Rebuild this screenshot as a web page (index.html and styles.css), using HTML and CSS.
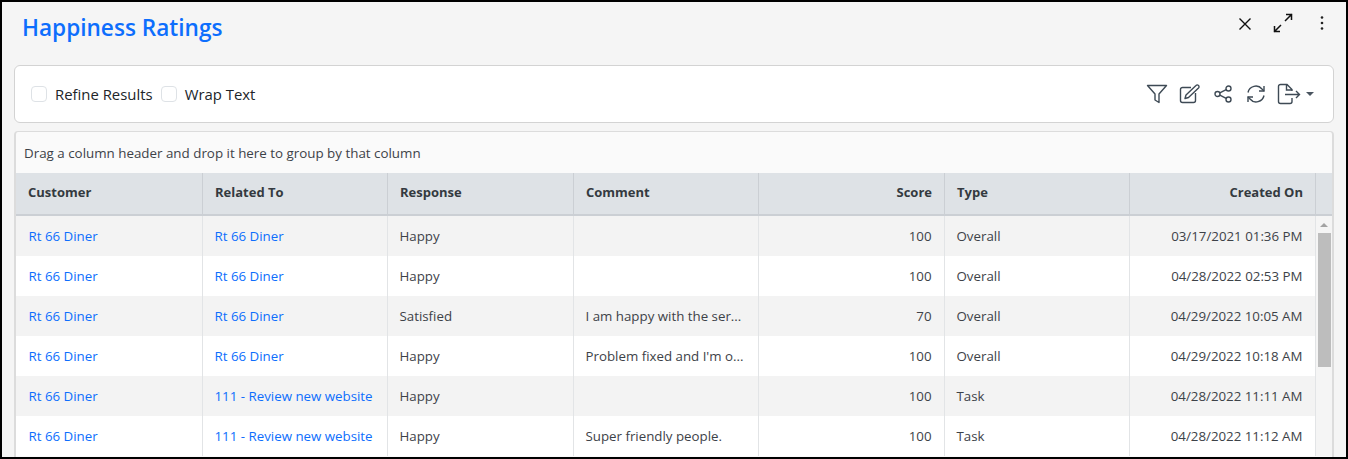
FILE: index.html
```html
<!DOCTYPE html>
<html lang="en">
<head>
<meta charset="utf-8">
<title>Happiness Ratings</title>
<link rel="stylesheet" href="styles.css">
</head>
<body>
<div class="frame">
  <header class="head">
    <h1 class="title">Happiness Ratings</h1>
    <div class="head-icons">
      <svg class="ic-close" width="14" height="14" viewBox="0 0 14 14"><path d="M1.5 1.5l11 11M12.5 1.5l-11 11" fill="none" stroke="#111" stroke-width="1.4"/></svg>
      <svg class="ic-expand" width="20" height="20" viewBox="0 0 20 20"><path d="M1 19L8 12M1.5 13v5.500H7M19 1l-7 7M13 1.500h5.500V7" fill="none" stroke="#111" stroke-width="1.5"/></svg>
      <svg class="ic-dots" width="4" height="16" viewBox="0 0 4 16"><circle cx="2" cy="2.500" r="1.300" fill="#222"/><circle cx="2" cy="8" r="1.300" fill="#222"/><circle cx="2" cy="13.500" r="1.300" fill="#222"/></svg>
    </div>
  </header>
  <section class="toolbar">
    <label class="check"><span class="box"></span><span>Refine Results</span></label>
    <label class="check"><span class="box"></span><span>Wrap Text</span></label>
    <div class="tools">
      <span class="tool"><svg class="stroke" width="22" height="20" viewBox="0 0 22 20"><path d="M1.500 1.500h19l-7.500 8.500v8.500l-4-2.500v-6z" stroke-linejoin="round"/></svg></span>
      <span class="tool"><svg class="stroke" width="21" height="20" viewBox="0 0 21 20"><path d="M12 3.500H3.500a2 2 0 0 0-2 2v11a2 2 0 0 0 2 2h11a2 2 0 0 0 2-2V9"/><path d="M7 11l10-9.500a1.500 1.500 0 0 1 2.500 2.500L9.500 13.500l-3.500 1z" stroke-linejoin="round"/></svg></span>
      <span class="tool"><svg class="stroke" width="18" height="18" viewBox="0 0 18 18"><circle cx="14.500" cy="3.500" r="2.500"/><circle cx="14.500" cy="14.500" r="2.500"/><circle cx="3.500" cy="9" r="2.500"/><path d="M5.800 7.800l6.400-3.200M5.800 10.200l6.400 3.200"/></svg></span>
      <span class="tool"><svg class="stroke" width="20" height="20" viewBox="0 0 20 20"><path d="M2 8.500A8 8 0 0 1 16 5l2 2M18 11.500A8 8 0 0 1 4 15l-2-2"/><path d="M18 2v5h-5M2 18v-5h5"/></svg></span>
      <span class="tool export">
        <svg class="stroke" width="24" height="22" viewBox="0 0 24 22"><path d="M15 8V6.500L10 1.500H3.500a2 2 0 0 0-2 2v15a2 2 0 0 0 2 2h9.500a2 2 0 0 0 2-2V15M9.500 1.500v5.500h5.500"/><path d="M8 11.500h14.500M19 8l3.500 3.500L19 15"/></svg>
        <span class="caret"></span>
      </span>
    </div>
  </section>
  <section class="grid">
    <div class="group-panel">Drag a column header and drop it here to group by that column</div>
    <div class="grid-body">
      <table class="table">
        <colgroup><col class="c187"><col class="c185"><col class="c186"><col class="c185"><col class="c186"><col class="c185"><col class="c186"></colgroup>
        <thead>
          <tr><th>Customer</th><th>Related To</th><th>Response</th><th>Comment</th><th class="num">Score</th><th>Type</th><th class="num">Created On</th></tr>
        </thead>
        <tbody>
          <tr><td><a href="#">Rt 66 Diner</a></td><td><a href="#">Rt 66 Diner</a></td><td>Happy</td><td></td><td class="num">100</td><td>Overall</td><td class="num">03/17/2021 01:36 PM</td></tr>
          <tr><td><a href="#">Rt 66 Diner</a></td><td><a href="#">Rt 66 Diner</a></td><td>Happy</td><td></td><td class="num">100</td><td>Overall</td><td class="num">04/28/2022 02:53 PM</td></tr>
          <tr><td><a href="#">Rt 66 Diner</a></td><td><a href="#">Rt 66 Diner</a></td><td>Satisfied</td><td>I am happy with the ser...</td><td class="num">70</td><td>Overall</td><td class="num">04/29/2022 10:05 AM</td></tr>
          <tr><td><a href="#">Rt 66 Diner</a></td><td><a href="#">Rt 66 Diner</a></td><td>Happy</td><td>Problem fixed and I'm o...</td><td class="num">100</td><td>Overall</td><td class="num">04/29/2022 10:18 AM</td></tr>
          <tr><td><a href="#">Rt 66 Diner</a></td><td><a href="#">111 - Review new website</a></td><td>Happy</td><td></td><td class="num">100</td><td>Task</td><td class="num">04/28/2022 11:11 AM</td></tr>
          <tr><td><a href="#">Rt 66 Diner</a></td><td><a href="#">111 - Review new website</a></td><td>Happy</td><td>Super friendly people.</td><td class="num">100</td><td>Task</td><td class="num">04/28/2022 11:12 AM</td></tr>
        </tbody>
      </table>
      <div class="scrollbar">
        <div class="scroll-head"></div>
        <div class="scroll-track"><span class="arrow"></span><span class="thumb"></span></div>
      </div>
    </div>
  </section>
</div>
</body>
</html>
```
FILE: styles.css
```css
* { box-sizing: border-box; }
html, body { margin: 0; height: 100%; overflow: hidden; }
body { font-family: "Open Sans", "Noto Sans", sans-serif; color: #212529; }
.frame { height: 459px; border: 2px solid #000; background: #f5f5f5; padding: 0 13px 0 13px; overflow: hidden; }
.head { display: flex; justify-content: space-between; height: 63px; }
.title { margin: 10px 0 0 7px; font-size: 22.6px; line-height: 32px; font-weight: 600; color: #0d6efd; }
.head-icons { display: flex; align-items: flex-start; padding-top: 10px; margin-right: 2px; }
.ic-close { margin-top: 5px; }
.ic-expand { margin-left: 21px; margin-top: 1px; margin-right: 1px; }
.ic-dots { margin-left: 26px; margin-right: 7px; margin-top: 3px; }
.toolbar { display: flex; align-items: center; height: 58px; background: #fff; border: 1px solid #d3d3d3; border-radius: 6px; padding: 0 19.5px 0 16px; margin: 0 -1px; }
.check { display: flex; align-items: center; font-size: 14.9px; margin-right: 8px; }
.box { width: 16px; height: 16px; border: 1px solid #dee2e6; border-radius: 4px; margin-right: 8px; background: #fff; }
.tools { margin-left: auto; display: flex; align-items: center; }
.tool { width: 33px; display: flex; justify-content: center; align-items: center; }
.tool.export { width: auto; margin-left: 5px; gap: 4.5px; }
.stroke { fill: none; stroke: #3e4a55; stroke-width: 1.4; }
.caret { width: 0; height: 0; border: 4px solid transparent; border-top-color: #4a5560; border-bottom: 0; }
.grid { margin: 8px -1px 0 -1px; height: 400px; background: #fafafa; border: 1px solid #dcdcdc; border-left-width: 2px; border-right-width: 2px; border-radius: 4px 4px 0 0; }
.group-panel { height: 41px; padding: 0 8px; display: flex; align-items: center; font-size: 13.36px; color: #3d4248; }
.grid-body { display: flex; background: #fff; }
.table { width: 1300px; flex: none; border-collapse: separate; border-spacing: 0; table-layout: fixed; font-size: 13.3px; color: #3d4248; }
.c185 { width: 185px; }
.c186 { width: 186px; }
.c187 { width: 187px; }
.table th { height: 43px; background: #dee2e6; border-right: 1px solid #cbcfd4; border-bottom: 2px solid #cbcfd4; padding: 0 12px 3px; text-align: left; font-weight: 700; font-size: 13px; color: #343a40; }
.table td { height: 40px; padding: 0 12.5px 0 11.5px; border-right: 1px solid #e2e4e6; white-space: nowrap; overflow: hidden; }
.table td:first-child { padding-left: 12.5px; }
.table tbody tr:nth-child(odd) { background: #f3f3f3; }
.table .num { text-align: right; }
.table a { color: #0d6efd; text-decoration: none; }
.scrollbar { flex: 1; }
.scroll-head { height: 43px; background: #dee2e6; border-bottom: 2px solid #cbcfd4; }
.scroll-track { display: flex; flex-direction: column; align-items: center; height: 240px; background: #f5f5f5; padding-top: 7px; }
.arrow { width: 0; height: 0; border: 4px solid transparent; border-bottom: 4px solid #a3a3a3; border-top: 0; }
.thumb { width: 13px; height: 134px; margin-top: 6px; background: #bdbdbd; }
```
